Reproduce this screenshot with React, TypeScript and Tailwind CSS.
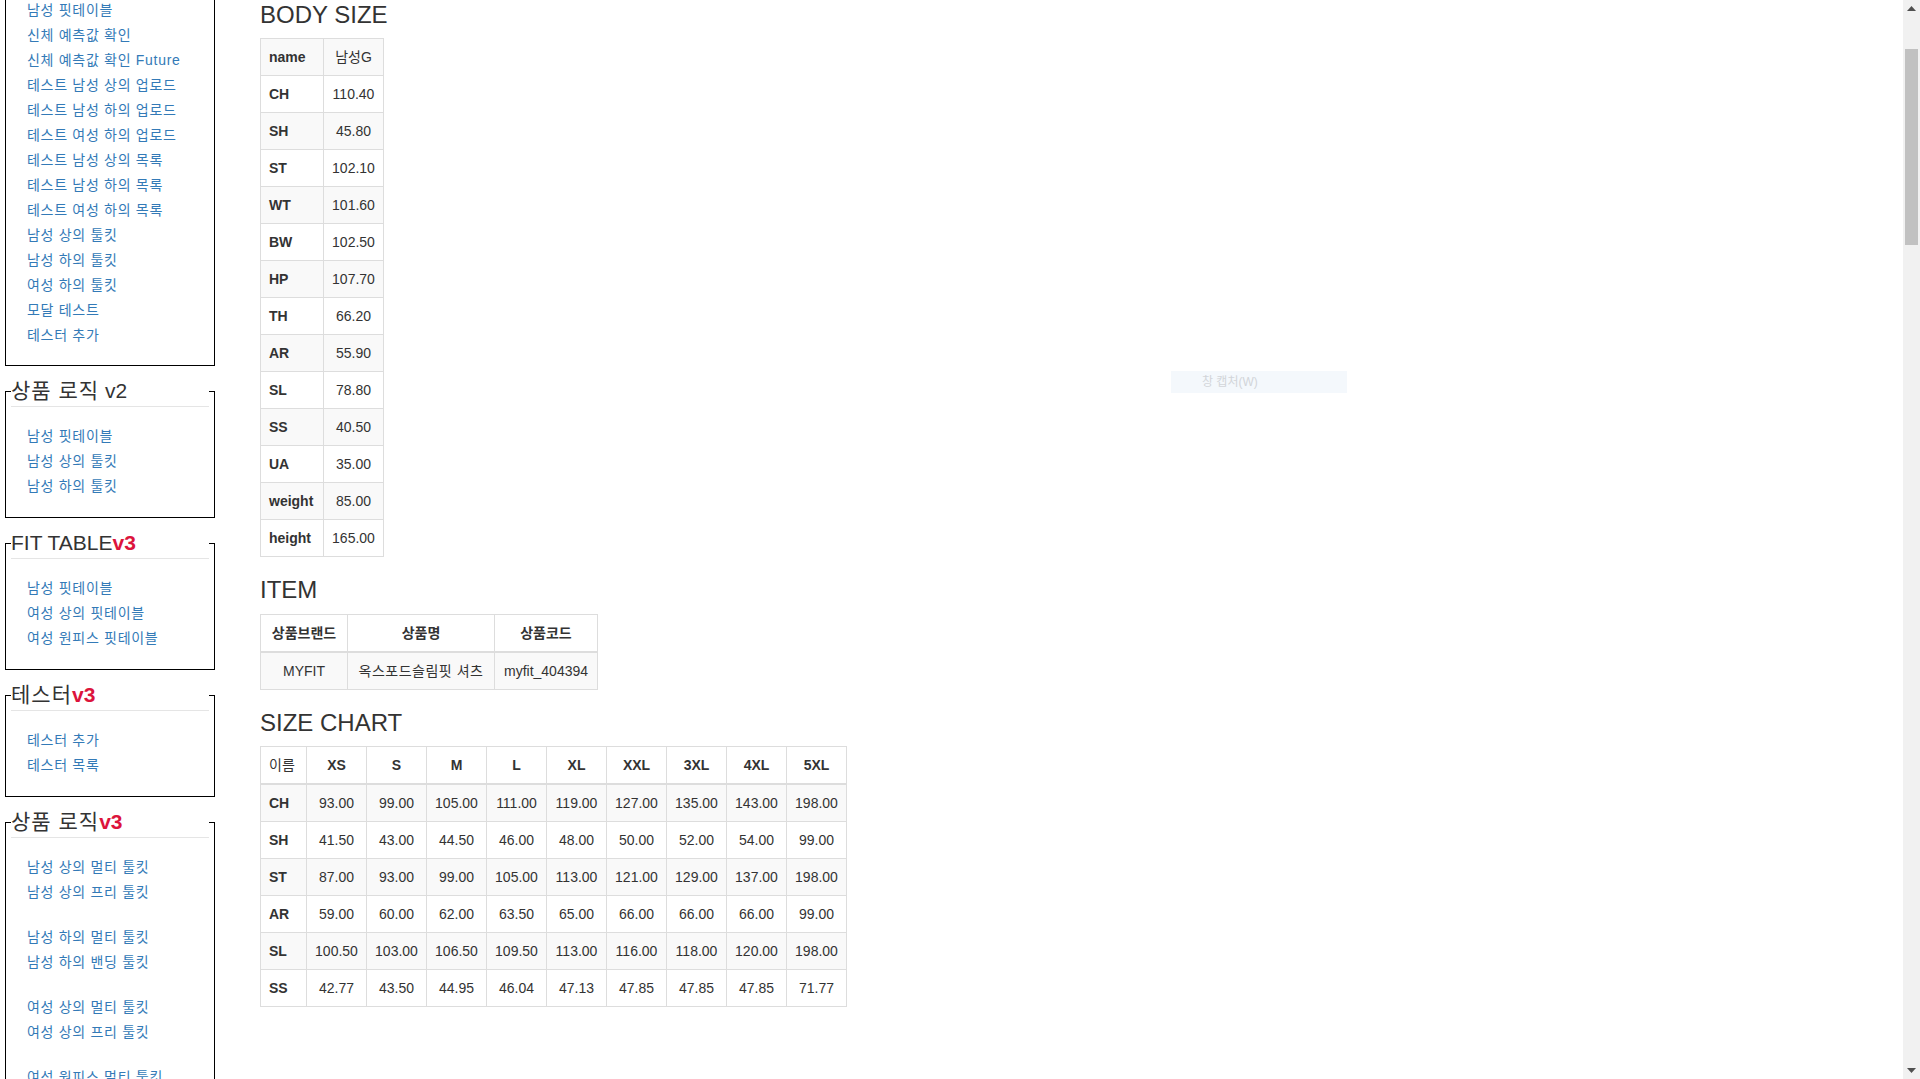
import React from "react";

const box1 = [
  "남성 핏테이블",
  "신체 예측값 확인",
  "신체 예측값 확인 Future",
  "테스트 남성 상의 업로드",
  "테스트 남성 하의 업로드",
  "테스트 여성 하의 업로드",
  "테스트 남성 상의 목록",
  "테스트 남성 하의 목록",
  "테스트 여성 하의 목록",
  "남성 상의 툴킷",
  "남성 하의 툴킷",
  "여성 하의 툴킷",
  "모달 테스트",
  "테스터 추가",
];

function LinkList({ items, className = "" }: { items: string[]; className?: string }) {
  return (
    <ul className={className}>
      {items.map((t) => (
        <li key={t}>
          <a href="#" className="block text-[14px] leading-[25px] tracking-[0.7px] text-[#337ab7] whitespace-nowrap">
            {t}
          </a>
        </li>
      ))}
    </ul>
  );
}

function Box({ title, groups }: { title: React.ReactNode; groups: string[][] }) {
  return (
    <fieldset className="mt-[10px] w-[210px] border border-black px-[5px] pb-[18px]">
      <legend className="w-full text-[21px] leading-[30px] text-[#333] border-b border-[#e5e5e5] whitespace-nowrap">
        {title}
      </legend>
      <div className="pt-[17px] pl-[16px]">
        {groups.map((g, i) => (
          <LinkList key={i} items={g} className={i > 0 ? "mt-[20px]" : ""} />
        ))}
      </div>
    </fieldset>
  );
}

const V3 = () => <span className="font-bold text-[#dc143c] tracking-normal">v3</span>;
const Ko = ({ children }: { children: React.ReactNode }) => <span className="tracking-[1px]">{children}</span>;

const bodyRows: [string, string][] = [
  ["name", "남성G"],
  ["CH", "110.40"],
  ["SH", "45.80"],
  ["ST", "102.10"],
  ["WT", "101.60"],
  ["BW", "102.50"],
  ["HP", "107.70"],
  ["TH", "66.20"],
  ["AR", "55.90"],
  ["SL", "78.80"],
  ["SS", "40.50"],
  ["UA", "35.00"],
  ["weight", "85.00"],
  ["height", "165.00"],
];

const sizeHead = ["XS", "S", "M", "L", "XL", "XXL", "3XL", "4XL", "5XL"];
const sizeRows: [string, string[]][] = [
  ["CH", ["93.00", "99.00", "105.00", "111.00", "119.00", "127.00", "135.00", "143.00", "198.00"]],
  ["SH", ["41.50", "43.00", "44.50", "46.00", "48.00", "50.00", "52.00", "54.00", "99.00"]],
  ["ST", ["87.00", "93.00", "99.00", "105.00", "113.00", "121.00", "129.00", "137.00", "198.00"]],
  ["AR", ["59.00", "60.00", "62.00", "63.50", "65.00", "66.00", "66.00", "66.00", "99.00"]],
  ["SL", ["100.50", "103.00", "106.50", "109.50", "113.00", "116.00", "118.00", "120.00", "198.00"]],
  ["SS", ["42.77", "43.50", "44.95", "46.04", "47.13", "47.85", "47.85", "47.85", "71.77"]],
];

const cell = "border border-[#ddd] p-[8px] leading-[20px] whitespace-nowrap";

function H3({ children, className = "" }: { children: React.ReactNode; className?: string }) {
  return (
    <h3 className={"text-[24px] leading-[26.4px] font-normal text-[#333] mb-[10px] " + className}>{children}</h3>
  );
}

export default function App() {
  return (
    <div className="relative flex h-[1079px] w-[1920px] overflow-hidden bg-white text-[14px] leading-[20px] text-[#333] font-['Liberation_Sans','Noto_Sans_CJK_KR',sans-serif]">
      <div className="flex flex-1 min-w-0">
        {/* Sidebar */}
        <aside className="w-[215px] shrink-0 pl-[5px]">
          <div className="-mt-[2px] w-[210px] border-x border-b border-black px-[5px] pb-[17px]">
            <div className="pl-[16px]">
              <LinkList items={box1} />
            </div>
          </div>
          <Box
            title={
              <>
                <Ko>상품 로직</Ko> v2
              </>
            }
            groups={[["남성 핏테이블", "남성 상의 툴킷", "남성 하의 툴킷"]]}
          />
          <Box
            title={
              <>
                FIT TABLE<V3 />
              </>
            }
            groups={[["남성 핏테이블", "여성 상의 핏테이블", "여성 원피스 핏테이블"]]}
          />
          <Box
            title={
              <>
                <Ko>테스터</Ko>
                <V3 />
              </>
            }
            groups={[["테스터 추가", "테스터 목록"]]}
          />
          <Box
            title={
              <>
                <Ko>상품 로직</Ko>
                <V3 />
              </>
            }
            groups={[
              ["남성 상의 멀티 툴킷", "남성 상의 프리 툴킷"],
              ["남성 하의 멀티 툴킷", "남성 하의 밴딩 툴킷"],
              ["여성 상의 멀티 툴킷", "여성 상의 프리 툴킷"],
              ["여성 원피스 멀티 툴킷", "여성 원피스 프리 툴킷"],
            ]}
          />
        </aside>

        {/* Main */}
        <main className="pl-[45px] pt-[2px]">
          <H3>BODY SIZE</H3>
          <table className="border-collapse border border-[#ddd] mb-[20px]">
            <tbody>
              {bodyRows.map(([k, v], i) => (
                <tr key={k} className={i % 2 === 0 ? "bg-[#f9f9f9]" : "bg-white"}>
                  <th className={cell + " w-[63px] text-left font-bold"}>{k}</th>
                  <td className={cell + " w-[60px] text-center"}>{v}</td>
                </tr>
              ))}
            </tbody>
          </table>

          <H3 className="mt-[20px]">ITEM</H3>
          <table className="border-collapse border border-[#ddd] mb-[20px]">
            <thead>
              <tr className="bg-white">
                <th className={cell + " w-[87px] border-b-2 text-center font-bold"}>상품브랜드</th>
                <th className={cell + " w-[147px] border-b-2 text-center font-bold"}>상품명</th>
                <th className={cell + " w-[103px] border-b-2 text-center font-bold"}>상품코드</th>
              </tr>
            </thead>
            <tbody>
              <tr className="bg-[#f9f9f9]">
                <td className={cell + " text-center"}>MYFIT</td>
                <td className={cell + " text-center tracking-[0.5px]"}>옥스포드슬림핏 셔츠</td>
                <td className={cell + " text-center"}>myfit_404394</td>
              </tr>
            </tbody>
          </table>

          <H3 className="mt-[20px]">SIZE CHART</H3>
          <table className="border-collapse border border-[#ddd]">
            <thead>
              <tr className="bg-white">
                <th className={cell + " w-[46px] border-b-2 text-left font-normal"}>이름</th>
                {sizeHead.map((h) => (
                  <th key={h} className={cell + " w-[60px] border-b-2 text-center font-bold"}>
                    {h}
                  </th>
                ))}
              </tr>
            </thead>
            <tbody>
              {sizeRows.map(([k, vals], i) => (
                <tr key={k} className={i % 2 === 0 ? "bg-[#f9f9f9]" : "bg-white"}>
                  <th className={cell + " text-left font-bold"}>{k}</th>
                  {vals.map((v, j) => (
                    <td key={j} className={cell + " text-center"}>
                      {v}
                    </td>
                  ))}
                </tr>
              ))}
            </tbody>
          </table>
        </main>
      </div>

      {/* Faded capture menu overlay */}
      <div className="absolute left-[1171px] top-[371px] flex h-[22px] w-[176px] items-center bg-[#f4f8fc] pl-[31px] text-[12px] text-[#d2d5d9]">
        창 캡처(W)
      </div>

      {/* Scrollbar */}
      <div className="flex h-full w-[17px] shrink-0 flex-col bg-[#f1f1f1]">
        <div className="flex h-[17px] items-center justify-center">
          <svg width="9" height="5" viewBox="0 0 9 5">
            <path d="M0 5 L4.5 0 L9 5 Z" fill="#505050" />
          </svg>
        </div>
        <div className="h-[32px]" />
        <div className="mx-[2px] h-[196px] bg-[#c1c1c1]" />
        <div className="flex-1" />
        <div className="flex h-[17px] items-center justify-center">
          <svg width="9" height="5" viewBox="0 0 9 5">
            <path d="M0 0 L4.5 5 L9 0 Z" fill="#505050" />
          </svg>
        </div>
      </div>
    </div>
  );
}
